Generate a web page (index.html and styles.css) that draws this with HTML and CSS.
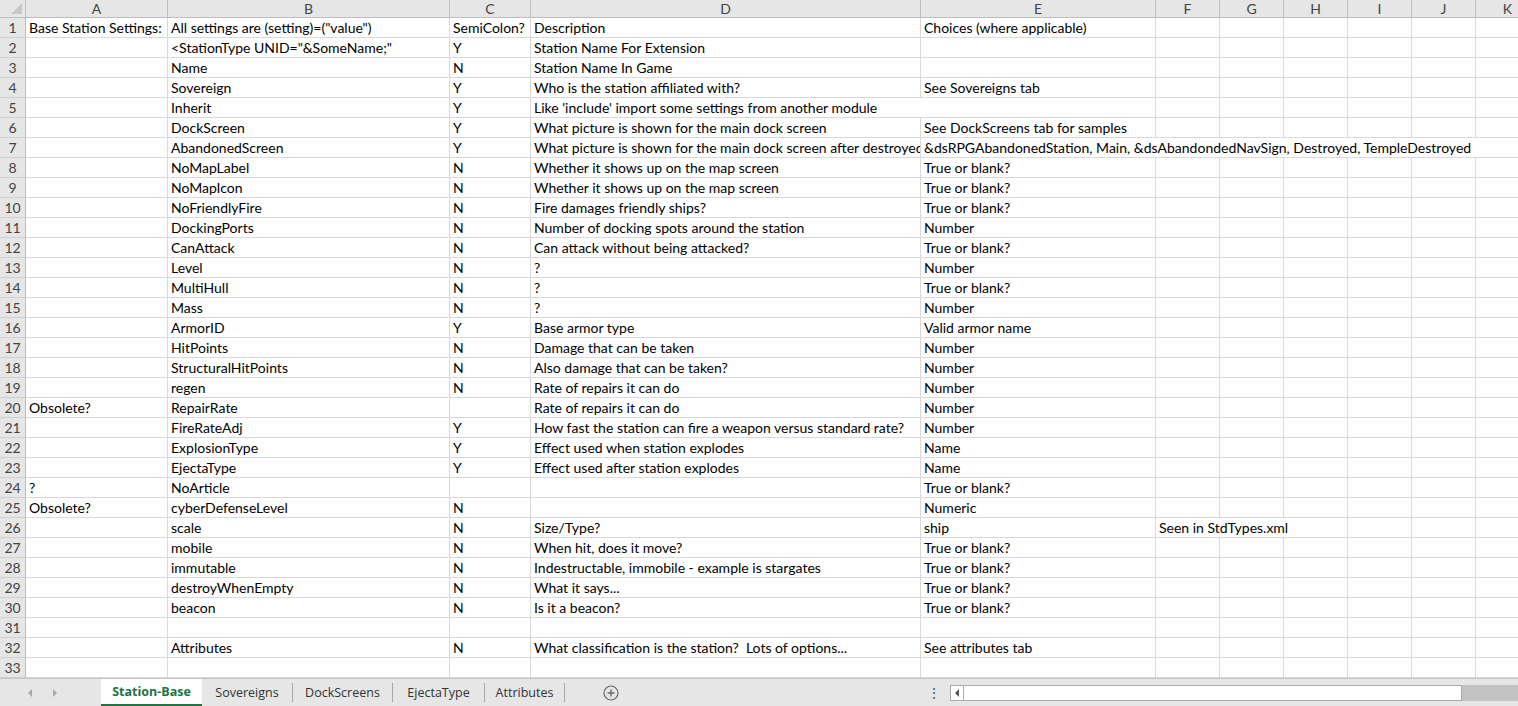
FILE: index.html
```html
<!DOCTYPE html>
<html lang="en">

<head>
    <meta charset="UTF-8">
    <title>Station-Base</title>
    <link rel="stylesheet" href="styles.css">
</head>

<body>
    <div class="sheet">
        <!-- column letters -->
        <div class="row head">
            <div class="corner"><span class="tri"></span></div>
            <div class="ch">A</div>
            <div class="ch">B</div>
            <div class="ch">C</div>
            <div class="ch">D</div>
            <div class="ch">E</div>
            <div class="ch">F</div>
            <div class="ch">G</div>
            <div class="ch">H</div>
            <div class="ch">I</div>
            <div class="ch">J</div>
            <div class="ch">K</div>
        </div>

        <div class="row"><div class="rh">1</div><div class="c">Base Station Settings:</div><div class="c">All settings are (setting)=("value")</div><div class="c">SemiColon?</div><div class="c">Description</div><div class="c">Choices (where applicable)</div><div class="c"></div><div class="c"></div><div class="c"></div><div class="c"></div><div class="c"></div><div class="c"></div></div>
        <div class="row"><div class="rh">2</div><div class="c"></div><div class="c">&lt;StationType UNID="&amp;SomeName;"</div><div class="c">Y</div><div class="c">Station Name For Extension</div><div class="c"></div><div class="c"></div><div class="c"></div><div class="c"></div><div class="c"></div><div class="c"></div><div class="c"></div></div>
        <div class="row"><div class="rh">3</div><div class="c"></div><div class="c">Name</div><div class="c">N</div><div class="c">Station Name In Game</div><div class="c"></div><div class="c"></div><div class="c"></div><div class="c"></div><div class="c"></div><div class="c"></div><div class="c"></div></div>
        <div class="row"><div class="rh">4</div><div class="c"></div><div class="c">Sovereign</div><div class="c">Y</div><div class="c">Who is the station affiliated with?</div><div class="c">See Sovereigns tab</div><div class="c"></div><div class="c"></div><div class="c"></div><div class="c"></div><div class="c"></div><div class="c"></div></div>
        <div class="row"><div class="rh">5</div><div class="c"></div><div class="c">Inherit</div><div class="c">Y</div><div class="c span2">Like 'include' import some settings from another module</div><div class="c"></div><div class="c"></div><div class="c"></div><div class="c"></div><div class="c"></div><div class="c"></div></div>
        <div class="row"><div class="rh">6</div><div class="c"></div><div class="c">DockScreen</div><div class="c">Y</div><div class="c">What picture is shown for the main dock screen</div><div class="c">See DockScreens tab for samples</div><div class="c"></div><div class="c"></div><div class="c"></div><div class="c"></div><div class="c"></div><div class="c"></div></div>
        <div class="row"><div class="rh">7</div><div class="c"></div><div class="c">AbandonedScreen</div><div class="c">Y</div><div class="c">What picture is shown for the main dock screen after destroyed</div><div class="c span7">&amp;dsRPGAbandonedStation, Main, &amp;dsAbandondedNavSign, Destroyed, TempleDestroyed</div></div>
        <div class="row"><div class="rh">8</div><div class="c"></div><div class="c">NoMapLabel</div><div class="c">N</div><div class="c">Whether it shows up on the map screen</div><div class="c">True or blank?</div><div class="c"></div><div class="c"></div><div class="c"></div><div class="c"></div><div class="c"></div><div class="c"></div></div>
        <div class="row"><div class="rh">9</div><div class="c"></div><div class="c">NoMapIcon</div><div class="c">N</div><div class="c">Whether it shows up on the map screen</div><div class="c">True or blank?</div><div class="c"></div><div class="c"></div><div class="c"></div><div class="c"></div><div class="c"></div><div class="c"></div></div>
        <div class="row"><div class="rh">10</div><div class="c"></div><div class="c">NoFriendlyFire</div><div class="c">N</div><div class="c">Fire damages friendly ships?</div><div class="c">True or blank?</div><div class="c"></div><div class="c"></div><div class="c"></div><div class="c"></div><div class="c"></div><div class="c"></div></div>
        <div class="row"><div class="rh">11</div><div class="c"></div><div class="c">DockingPorts</div><div class="c">N</div><div class="c">Number of docking spots around the station</div><div class="c">Number</div><div class="c"></div><div class="c"></div><div class="c"></div><div class="c"></div><div class="c"></div><div class="c"></div></div>
        <div class="row"><div class="rh">12</div><div class="c"></div><div class="c">CanAttack</div><div class="c">N</div><div class="c">Can attack without being attacked?</div><div class="c">True or blank?</div><div class="c"></div><div class="c"></div><div class="c"></div><div class="c"></div><div class="c"></div><div class="c"></div></div>
        <div class="row"><div class="rh">13</div><div class="c"></div><div class="c">Level</div><div class="c">N</div><div class="c">?</div><div class="c">Number</div><div class="c"></div><div class="c"></div><div class="c"></div><div class="c"></div><div class="c"></div><div class="c"></div></div>
        <div class="row"><div class="rh">14</div><div class="c"></div><div class="c">MultiHull</div><div class="c">N</div><div class="c">?</div><div class="c">True or blank?</div><div class="c"></div><div class="c"></div><div class="c"></div><div class="c"></div><div class="c"></div><div class="c"></div></div>
        <div class="row"><div class="rh">15</div><div class="c"></div><div class="c">Mass</div><div class="c">N</div><div class="c">?</div><div class="c">Number</div><div class="c"></div><div class="c"></div><div class="c"></div><div class="c"></div><div class="c"></div><div class="c"></div></div>
        <div class="row"><div class="rh">16</div><div class="c"></div><div class="c">ArmorID</div><div class="c">Y</div><div class="c">Base armor type</div><div class="c">Valid armor name</div><div class="c"></div><div class="c"></div><div class="c"></div><div class="c"></div><div class="c"></div><div class="c"></div></div>
        <div class="row"><div class="rh">17</div><div class="c"></div><div class="c">HitPoints</div><div class="c">N</div><div class="c">Damage that can be taken</div><div class="c">Number</div><div class="c"></div><div class="c"></div><div class="c"></div><div class="c"></div><div class="c"></div><div class="c"></div></div>
        <div class="row"><div class="rh">18</div><div class="c"></div><div class="c">StructuralHitPoints</div><div class="c">N</div><div class="c">Also damage that can be taken?</div><div class="c">Number</div><div class="c"></div><div class="c"></div><div class="c"></div><div class="c"></div><div class="c"></div><div class="c"></div></div>
        <div class="row"><div class="rh">19</div><div class="c"></div><div class="c">regen</div><div class="c">N</div><div class="c">Rate of repairs it can do</div><div class="c">Number</div><div class="c"></div><div class="c"></div><div class="c"></div><div class="c"></div><div class="c"></div><div class="c"></div></div>
        <div class="row"><div class="rh">20</div><div class="c">Obsolete?</div><div class="c">RepairRate</div><div class="c"></div><div class="c">Rate of repairs it can do</div><div class="c">Number</div><div class="c"></div><div class="c"></div><div class="c"></div><div class="c"></div><div class="c"></div><div class="c"></div></div>
        <div class="row"><div class="rh">21</div><div class="c"></div><div class="c">FireRateAdj</div><div class="c">Y</div><div class="c">How fast the station can fire a weapon versus standard rate?</div><div class="c">Number</div><div class="c"></div><div class="c"></div><div class="c"></div><div class="c"></div><div class="c"></div><div class="c"></div></div>
        <div class="row"><div class="rh">22</div><div class="c"></div><div class="c">ExplosionType</div><div class="c">Y</div><div class="c">Effect used when station explodes</div><div class="c">Name</div><div class="c"></div><div class="c"></div><div class="c"></div><div class="c"></div><div class="c"></div><div class="c"></div></div>
        <div class="row"><div class="rh">23</div><div class="c"></div><div class="c">EjectaType</div><div class="c">Y</div><div class="c">Effect used after station explodes</div><div class="c">Name</div><div class="c"></div><div class="c"></div><div class="c"></div><div class="c"></div><div class="c"></div><div class="c"></div></div>
        <div class="row"><div class="rh">24</div><div class="c">?</div><div class="c">NoArticle</div><div class="c"></div><div class="c"></div><div class="c">True or blank?</div><div class="c"></div><div class="c"></div><div class="c"></div><div class="c"></div><div class="c"></div><div class="c"></div></div>
        <div class="row"><div class="rh">25</div><div class="c">Obsolete?</div><div class="c">cyberDefenseLevel</div><div class="c">N</div><div class="c"></div><div class="c">Numeric</div><div class="c"></div><div class="c"></div><div class="c"></div><div class="c"></div><div class="c"></div><div class="c"></div></div>
        <div class="row"><div class="rh">26</div><div class="c"></div><div class="c">scale</div><div class="c">N</div><div class="c">Size/Type?</div><div class="c">ship</div><div class="c span3">Seen in StdTypes.xml</div><div class="c"></div><div class="c"></div><div class="c"></div></div>
        <div class="row"><div class="rh">27</div><div class="c"></div><div class="c">mobile</div><div class="c">N</div><div class="c">When hit, does it move?</div><div class="c">True or blank?</div><div class="c"></div><div class="c"></div><div class="c"></div><div class="c"></div><div class="c"></div><div class="c"></div></div>
        <div class="row"><div class="rh">28</div><div class="c"></div><div class="c">immutable</div><div class="c">N</div><div class="c">Indestructable, immobile - example is stargates</div><div class="c">True or blank?</div><div class="c"></div><div class="c"></div><div class="c"></div><div class="c"></div><div class="c"></div><div class="c"></div></div>
        <div class="row"><div class="rh">29</div><div class="c"></div><div class="c">destroyWhenEmpty</div><div class="c">N</div><div class="c">What it says...</div><div class="c">True or blank?</div><div class="c"></div><div class="c"></div><div class="c"></div><div class="c"></div><div class="c"></div><div class="c"></div></div>
        <div class="row"><div class="rh">30</div><div class="c"></div><div class="c">beacon</div><div class="c">N</div><div class="c">Is it a beacon?</div><div class="c">True or blank?</div><div class="c"></div><div class="c"></div><div class="c"></div><div class="c"></div><div class="c"></div><div class="c"></div></div>
        <div class="row"><div class="rh">31</div><div class="c"></div><div class="c"></div><div class="c"></div><div class="c"></div><div class="c"></div><div class="c"></div><div class="c"></div><div class="c"></div><div class="c"></div><div class="c"></div><div class="c"></div></div>
        <div class="row"><div class="rh">32</div><div class="c"></div><div class="c">Attributes</div><div class="c">N</div><div class="c">What classification is the station?&nbsp; Lots of options...</div><div class="c">See attributes tab</div><div class="c"></div><div class="c"></div><div class="c"></div><div class="c"></div><div class="c"></div><div class="c"></div></div>
        <div class="row"><div class="rh">33</div><div class="c"></div><div class="c"></div><div class="c"></div><div class="c"></div><div class="c"></div><div class="c"></div><div class="c"></div><div class="c"></div><div class="c"></div><div class="c"></div><div class="c"></div></div>
    </div>

    <!-- sheet tabs -->
    <div class="tabbar">
        <div class="nav">
            <span class="arr left"></span>
            <span class="arr right"></span>
        </div>
        <div class="tab active">Station-Base</div>
        <div class="tab w91">Sovereigns</div>
        <div class="tab w100">DockScreens</div>
        <div class="tab w92">EjectaType</div>
        <div class="tab w80">Attributes</div>
        <div class="add">
            <svg width="16" height="16" viewBox="0 0 16 16">
                <circle cx="8" cy="8" r="7" fill="none" stroke="#6a6a6a" stroke-width="1.2" />
                <path d="M8 4.5v7M4.5 8h7" stroke="#6a6a6a" stroke-width="1.4" />
            </svg>
        </div>
        <div class="dots">&#8942;</div>
        <div class="hscroll">
            <div class="btn"><span class="arr small"></span></div>
            <div class="thumb"></div>
            <div class="track"></div>
        </div>
    </div>
</body>

</html>
```

FILE: styles.css
```css
/* reset */
* {
    margin: 0;
    box-sizing: border-box;
}

body {
    width: 1518px;
    height: 706px;
    overflow: hidden;
    background: #fff;
    font-family: Lato, "Open Sans", sans-serif;
    font-size: 14px;
    color: #000;
}

/* grid */
.sheet {
    width: 1518px;
    overflow: hidden;
}

.row {
    display: grid;
    grid-template-columns: 26px 142px 282px 81px 390px 235px repeat(6, 64px);
    height: 20px;
    width: 1540px;
}

.c {
    border-right: 1px solid #d9d9d9;
    border-bottom: 1px solid #d9d9d9;
    padding: 0 3px;
    line-height: 19px;
    white-space: nowrap;
    overflow: hidden;
}

.span2 {
    grid-column: span 2;
}

.span3 {
    grid-column: span 3;
}

.span7 {
    grid-column: span 7;
}

/* headers */
.head {
    height: 18px;
}

.corner,
.ch,
.rh {
    background: #e6e6e6;
    color: #444;
    border-right: 1px solid #bdbdbd;
    border-bottom: 1px solid #bdbdbd;
}

.corner {
    position: relative;
}

.tri {
    position: absolute;
    right: 3px;
    bottom: 3px;
    width: 0;
    height: 0;
    border-left: 11px solid transparent;
    border-bottom: 11px solid #c8c8c8;
}

.ch {
    text-align: center;
    line-height: 17px;
    font-size: 14px;
}

.rh {
    text-align: center;
    line-height: 19px;
    border-bottom-color: #d0d0d0;
}

/* tab bar */
.tabbar {
    display: flex;
    align-items: center;
    height: 28px;
    background: #e6e6e6;
    border-top: 1px solid #c4c4c4;
    font-family: "Open Sans", Lato, sans-serif;
    font-size: 12.5px;
    color: #333;
}

.nav {
    display: flex;
    align-items: center;
    gap: 21px;
    width: 101px;
    padding-left: 28px;
}

.arr {
    width: 0;
    height: 0;
    border-top: 4px solid transparent;
    border-bottom: 4px solid transparent;
}

.arr.left {
    border-right: 4px solid #a8a8a8;
}

.arr.right {
    border-left: 4px solid #a8a8a8;
}

.tab {
    height: 19px;
    line-height: 19px;
    text-align: center;
    border-right: 1px solid #a8a8a8;
}

.tab.active {
    width: 101px;
    height: 27px;
    line-height: 26px;
    align-self: flex-start;
    background: #fff;
    color: #217346;
    font-weight: bold;
    border-right: none;
    border-bottom: 2px solid #217346;
}

.w91 {
    width: 91px;
}

.w100 {
    width: 100px;
}

.w92 {
    width: 92px;
}

.w80 {
    width: 80px;
}

.add {
    display: flex;
    margin-left: 38px;
}

.dots {
    margin-left: 308px;
    width: 22px;
    color: #555;
    font-size: 14px;
}

.hscroll {
    display: flex;
    margin-left: 1px;
    height: 16px;
    flex: 1;
}

.btn {
    display: flex;
    align-items: center;
    justify-content: center;
    width: 14px;
    background: #fff;
    border: 1px solid #ababab;
}

.arr.small {
    border-right: 4px solid #555;
}

.thumb {
    width: 498px;
    background: #fff;
    border: 1px solid #ababab;
    border-left: none;
}

.track {
    flex: 1;
    background: #c2c2c2;
}
```
